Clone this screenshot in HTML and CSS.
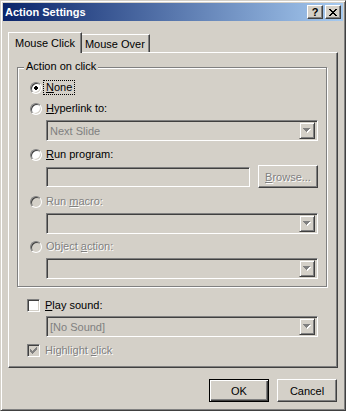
FILE: index.html
```html
<!DOCTYPE html>
<html lang="en">
<head>
    <meta charset="UTF-8">
    <title>Action Settings</title>
    <link rel="stylesheet" href="styles.css">
</head>
<body>
    <div class="window">
        <div class="titlebar">
            <span class="title">Action Settings</span>
            <span class="caption-btn help">?</span>
            <span class="caption-btn close">
                <svg width="8" height="7" viewBox="0 0 8 7" shape-rendering="crispEdges"><path d="M0 0h2v1h-2zM6 0h2v1h-2zM1 1h2v1h-2zM5 1h2v1h-2zM2 2h4v1h-4zM3 3h2v1h-2zM2 4h4v1h-4zM1 5h2v1h-2zM5 5h2v1h-2zM0 6h2v1h-2zM6 6h2v1h-2z" fill="#000"/></svg>
            </span>
        </div>

        <div class="client">
            <div class="tab-strip">
                <div class="tab active">Mouse Click</div>
                <div class="tab">Mouse Over</div>
            </div>

            <div class="tab-panel">
                <div class="group">
                    <div class="group-title">Action on click</div>

                    <div class="group-body">
                        <div class="opt first">
                            <span class="radio checked"><svg width="4" height="4" viewBox="0 0 4 4" shape-rendering="crispEdges"><path d="M1 0h2v1h1v2h-1v1h-2v-1h-1v-2h1z" fill="#000"/></svg></span>
                            <span class="label focus"><u>N</u>one</span>
                        </div>
                        <div class="opt">
                            <span class="radio"></span>
                            <span class="label"><u>H</u>yperlink to:</span>
                        </div>
                        <div class="combo indent">
                            <span class="combo-text">Next Slide</span>
                            <span class="drop"><svg width="8" height="5" viewBox="0 0 8 5" shape-rendering="crispEdges"><path d="M1 1h7v1h-1v1h-1v1h-1v1h-1v-1h-1v-1h-1v-1h-1z" fill="#fff"/><path d="M0 0h7v1h-1v1h-1v1h-1v1h-1v-1h-1v-1h-1v-1h-1z" fill="#808080"/></svg></span>
                        </div>
                        <div class="opt">
                            <span class="radio"></span>
                            <span class="label"><u>R</u>un program:</span>
                        </div>
                        <div class="field-row indent">
                            <span class="textbox"></span>
                            <span class="btn browse dis"><u>B</u>rowse...</span>
                        </div>
                        <div class="opt">
                            <span class="radio off"></span>
                            <span class="label dis">Run <u>m</u>acro:</span>
                        </div>
                        <div class="combo indent">
                            <span class="combo-text"></span>
                            <span class="drop"><svg width="8" height="5" viewBox="0 0 8 5" shape-rendering="crispEdges"><path d="M1 1h7v1h-1v1h-1v1h-1v1h-1v-1h-1v-1h-1v-1h-1z" fill="#fff"/><path d="M0 0h7v1h-1v1h-1v1h-1v1h-1v-1h-1v-1h-1v-1h-1z" fill="#808080"/></svg></span>
                        </div>
                        <div class="opt tight">
                            <span class="radio off"></span>
                            <span class="label dis">Object <u>a</u>ction:</span>
                        </div>
                        <div class="combo indent">
                            <span class="combo-text"></span>
                            <span class="drop"><svg width="8" height="5" viewBox="0 0 8 5" shape-rendering="crispEdges"><path d="M1 1h7v1h-1v1h-1v1h-1v1h-1v-1h-1v-1h-1v-1h-1z" fill="#fff"/><path d="M0 0h7v1h-1v1h-1v1h-1v1h-1v-1h-1v-1h-1v-1h-1z" fill="#808080"/></svg></span>
                        </div>
                    </div>
                </div>

                <div class="opt check-row">
                    <span class="checkbox"></span>
                    <span class="label"><u>P</u>lay sound:</span>
                </div>
                <div class="combo sound">
                    <span class="combo-text">[No Sound]</span>
                    <span class="drop"><svg width="8" height="5" viewBox="0 0 8 5" shape-rendering="crispEdges"><path d="M1 1h7v1h-1v1h-1v1h-1v1h-1v-1h-1v-1h-1v-1h-1z" fill="#fff"/><path d="M0 0h7v1h-1v1h-1v1h-1v1h-1v-1h-1v-1h-1v-1h-1z" fill="#808080"/></svg></span>
                </div>
                <div class="opt check-row highlight">
                    <span class="checkbox off"><svg width="7" height="7" viewBox="0 0 7 7" shape-rendering="crispEdges"><path d="M6 0h1v3h-1v1h-1v1h-1v1h-1v1h-1v-1h-1v-1h-1v-3h1v1h1v1h1v-1h1v-1h1v-1h1z" fill="#808080"/></svg></span>
                    <span class="label dis">Highlight <u>c</u>lick</span>
                </div>
            </div>

            <div class="actions">
                <span class="btn default">OK</span>
                <span class="btn">Cancel</span>
            </div>
        </div>
    </div>
</body>
</html>
```

FILE: styles.css
```css
* {
    box-sizing: border-box;
}
body {
    margin: 0;
    background: #d4d0c8;
    font-family: "Liberation Sans", Arial, sans-serif;
    font-size: 11px;
    color: #000;
}
.window {
    width: 346px;
    height: 411px;
    background: #d4d0c8;
    border: 1px solid;
    border-color: #d4d0c8 #404040 #404040 #d4d0c8;
    box-shadow: inset 1px 1px #fff, inset -1px -1px #808080;
    padding: 2px;
}

/* title bar */
.titlebar {
    height: 18px;
    display: flex;
    align-items: center;
    padding: 0 2px 0 2px;
    background: linear-gradient(to right, #0a246a, #a6caf0);
}
.title {
    flex: 1;
    color: #fff;
    font-weight: bold;
}
.caption-btn {
    width: 16px;
    height: 14px;
    display: flex;
    align-items: center;
    justify-content: center;
    background: #d4d0c8;
    border: 1px solid;
    border-color: #fff #404040 #404040 #fff;
    box-shadow: inset -1px -1px #808080;
}
.help {
    margin-right: 2px;
    font-weight: bold;
    line-height: 1;
    padding-top: 1px;
}

/* tabs */
.client {
    padding: 13px 6px 0 5px;
}
.tab-strip {
    display: flex;
    align-items: flex-end;
    height: 18px;
    padding-left: 2px;
}
.tab {
    height: 18px;
    padding: 3px 4px 0;
    line-height: 13px;
    border: 1px solid;
    border-bottom: none;
    border-color: #fff #404040 transparent #fff;
    box-shadow: inset -1px 0 #808080;
    background: #d4d0c8;
}
.tab.active {
    position: relative;
    z-index: 1;
    height: 21px;
    margin: 0 -2px -1px;
    padding: 4px 6px 0;
}
.tab-panel {
    width: 330px;
    height: 316px;
    border: 1px solid;
    border-color: #fff #404040 #404040 #fff;
    box-shadow: inset -1px -1px #808080;
    padding: 14px 10px 0 8px;
}

/* group box */
.group {
    border: 1px solid #808080;
    box-shadow: 1px 1px 0 #fff, inset 1px 1px 0 #fff;
    padding: 0 8px 7px 0;
}
.group-title {
    width: max-content;
    margin: -8px 0 0 6px;
    padding: 0 2px;
    line-height: 13px;
    background: #d4d0c8;
}
.group-body {
    padding-left: 12px;
}

/* options */
.opt {
    display: flex;
    align-items: center;
    height: 15px;
    margin-top: 6px;
}
.opt.first {
    margin-top: 7px;
}
.opt.tight {
    margin-top: 5px;
}
.label {
    margin-left: 1px;
    padding: 0 2px;
    line-height: 13px;
    border: 1px dotted transparent;
}
.label.focus {
    border-color: #000;
}
.dis {
    color: #808080;
    text-shadow: 1px 1px 0 #fff;
}
.radio {
    width: 12px;
    height: 12px;
    border-radius: 50%;
    display: flex;
    align-items: center;
    justify-content: center;
    background: #fff;
    border: 1px solid;
    border-color: #808080 #fff #fff #808080;
    box-shadow: inset 1px 1px #404040, inset -1px -1px #d4d0c8;
}
.radio.off {
    background: #d4d0c8;
}
.checkbox {
    width: 13px;
    height: 13px;
    display: flex;
    align-items: center;
    justify-content: center;
    background: #fff;
    border: 1px solid;
    border-color: #808080 #fff #fff #808080;
    box-shadow: inset 1px 1px #404040, inset -1px -1px #d4d0c8;
}
.checkbox.off {
    background: #d4d0c8;
}
.checkbox + .label {
    margin-left: 2px;
}
.check-row {
    margin: 11px 0 0 10px;
}
.check-row.highlight {
    margin-top: 6px;
}

/* combos and fields */
.combo,
.textbox {
    display: flex;
    align-items: center;
    border: 1px solid;
    border-color: #808080 #fff #fff #808080;
    box-shadow: inset 1px 1px #404040, inset -1px -1px #d4d0c8;
    background: #d4d0c8;
}
.combo {
    width: 272px;
    height: 21px;
    padding: 2px;
}
.indent {
    margin: 4px 0 0 16px;
}
.combo-text {
    flex: 1;
    padding-left: 1px;
    color: #808080;
}
.drop {
    width: 16px;
    height: 17px;
    display: flex;
    align-items: center;
    justify-content: center;
    border: 1px solid;
    border-color: #d4d0c8 #404040 #404040 #d4d0c8;
    box-shadow: inset 1px 1px #fff, inset -1px -1px #808080;
}
.sound {
    margin: 3px 0 0 29px;
}
.field-row {
    display: flex;
    align-items: center;
    justify-content: space-between;
    height: 23px;
    margin-top: 3px;
}
.textbox {
    width: 204px;
    height: 20px;
}

/* buttons */
.btn {
    width: 60px;
    height: 23px;
    display: flex;
    align-items: center;
    justify-content: center;
    border: 1px solid;
    border-color: #fff #404040 #404040 #fff;
    box-shadow: inset -1px -1px #808080;
}
.btn.default {
    border-color: #000;
    box-shadow: inset 1px 1px #fff, inset -1px -1px #404040, inset -2px -2px #808080;
}
.actions {
    display: flex;
    justify-content: flex-end;
    gap: 8px;
    margin-top: 11px;
}
```
